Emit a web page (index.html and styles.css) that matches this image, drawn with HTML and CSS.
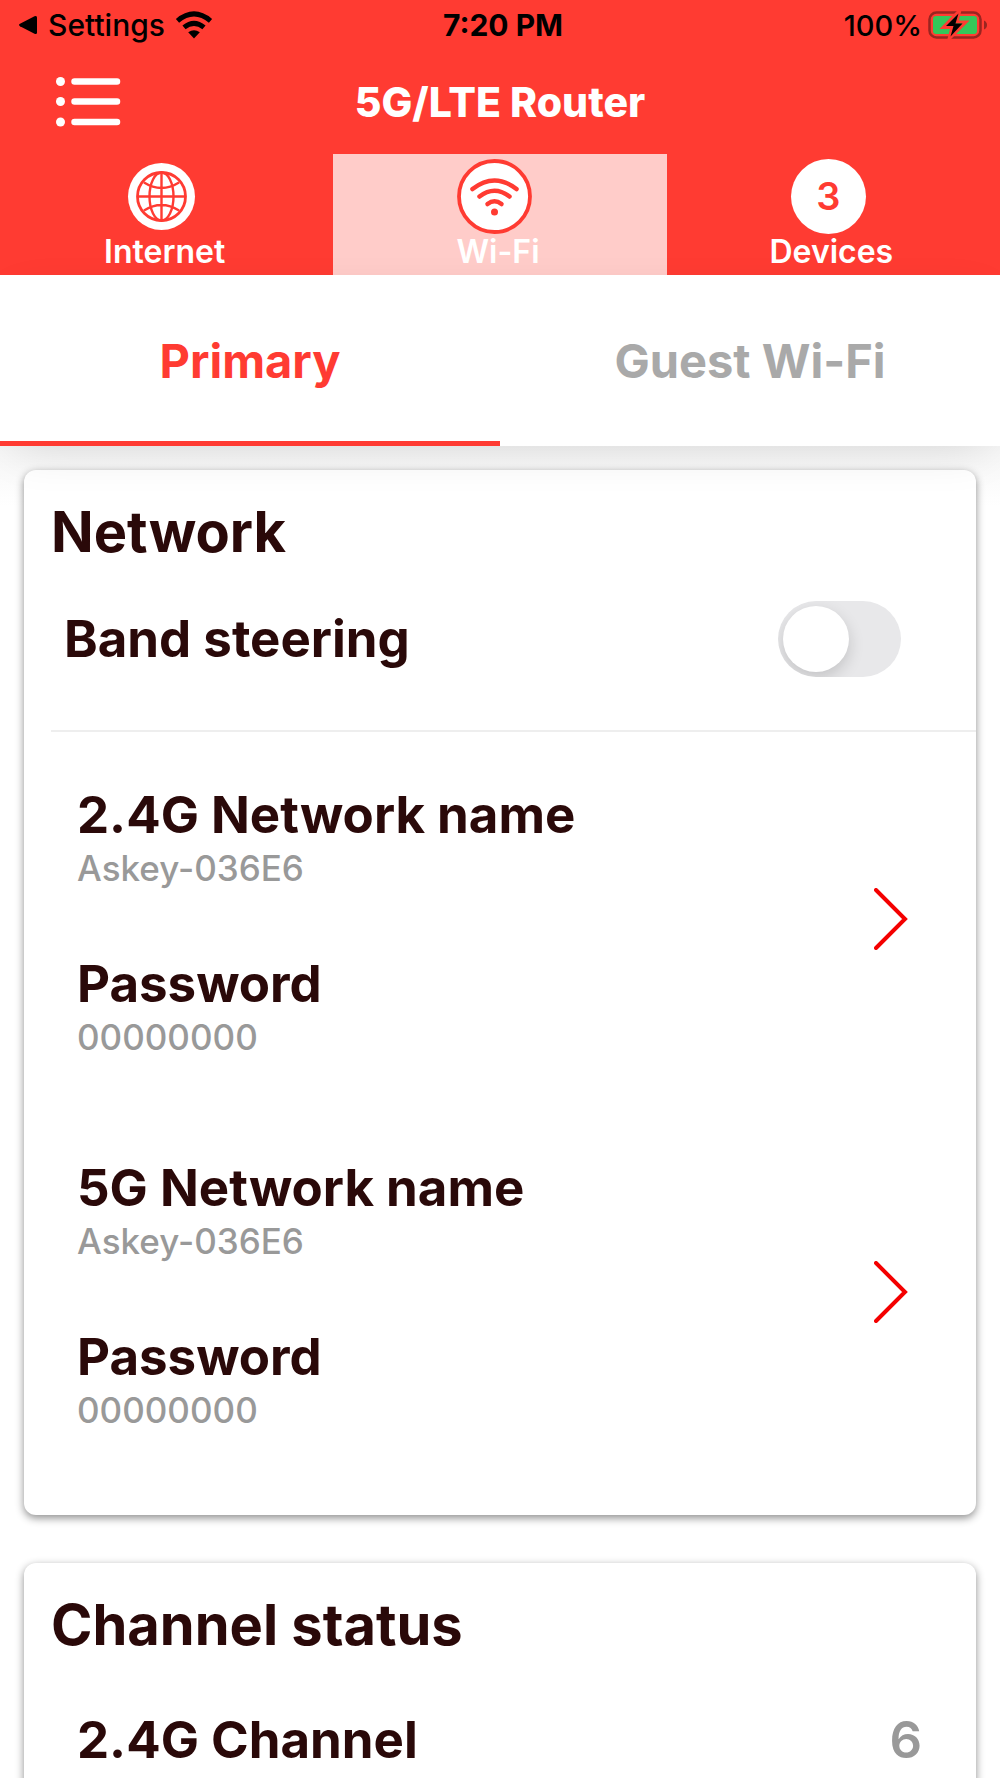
FILE: index.html
```html
<!DOCTYPE html>
<html lang="en">
<head>
<meta charset="utf-8">
<meta name="viewport" content="width=device-width, initial-scale=1">
<title>5G/LTE Router</title>
<link rel="stylesheet" href="styles.css">
</head>
<body>
<div class="app">
  <header class="header">
    <div class="status">
      <a class="status-back" href="#settings">
        <svg class="back-arrow" viewBox="0 0 20 20" aria-hidden="true"><path d="M2 8.800 16.500 1.300Q19 .3 19 2.500V17.500Q19 19.700 16.500 18.700L2 11.200Q0 10 2 8.800Z"/></svg>
        <span>Settings</span>
        <svg class="status-wifi" viewBox="0 0 38 28" aria-hidden="true">
          <path d="M19 27.500 24.800 21.300Q19 17 13.200 21.300Z"/>
          <path d="M9 16.400Q19 8.300 29 16.400" fill="none" stroke="#000" stroke-width="5"/>
          <path d="M2.500 9.800Q19-4 35.500 9.800" fill="none" stroke="#000" stroke-width="5"/>
        </svg>
      </a>
      <time class="status-time">7:20 PM</time>
      <div class="status-power">
        <span>100%</span>
        <svg class="battery" viewBox="0 0 60 30" aria-hidden="true">
          <rect x="1.500" y="2.500" width="51" height="25" rx="7" fill="none" stroke="#9a2520" stroke-width="2.500"/>
          <path d="M56 10.500Q59 12 59 15T56 19.500Z" fill="#9a2520"/>
          <rect x="5" y="6" width="44" height="18" rx="3" fill="#34c759"/>
          <path d="M30 2 15 17.500H24L21 29 38 12H29L31.500 2Z" fill="#34c759" stroke="#ff3b32" stroke-width="3"/>
          <path d="M30.500 3.500 18 16H25.500L22.500 26.500 34.500 13.500H27.500Z"/>
        </svg>
      </div>
    </div>
    <div class="titlebar">
      <button class="menu" type="button" aria-label="Menu">
        <svg viewBox="0 0 66 50" aria-hidden="true">
          <g fill="#fff"><circle cx="4.500" cy="4.500" r="4.500"/><circle cx="4.500" cy="24.500" r="4.500"/><circle cx="4.500" cy="45" r="4.500"/></g>
          <path d="M18.500 4.500H61M18.500 24.500H61M18.500 45H61" stroke="#fff" stroke-width="6.500" stroke-linecap="round"/>
        </svg>
      </button>
      <h1 class="title">5G/LTE Router</h1>
    </div>
    <nav class="tabs">
      <a class="tab" href="#internet">
        <svg class="tab-icon" viewBox="0 0 75 75" aria-hidden="true">
          <circle cx="37.500" cy="37.500" r="33.500" fill="#fff"/>
          <g fill="none" stroke="#ff3b32" stroke-width="2.400">
            <circle cx="37.500" cy="37.500" r="24" stroke-width="2.800"/>
            <ellipse cx="37.500" cy="37.500" rx="12" ry="24"/>
            <path d="M37.500 13.500V61.500M13.500 37.500H61.500M20 23.500Q37.500 34.500 55 23.500M20 51.500Q37.500 40.500 55 51.500"/>
          </g>
        </svg>
        <span class="tab-label">Internet</span>
      </a>
      <a class="tab tab-active" href="#wifi" aria-current="page">
        <svg class="tab-icon" viewBox="0 0 75 75" aria-hidden="true">
          <circle cx="37.500" cy="37.500" r="35.500" fill="#fff" stroke="#ff3b32" stroke-width="3.800"/>
          <g fill="none" stroke="#ff3b32" stroke-width="4.500" stroke-linecap="round">
            <path d="M15.500 30Q37.500 13 59.500 30"/>
            <path d="M22.500 37.500Q37.500 26 52.500 37.500"/>
            <path d="M30.500 45Q37.500 39.500 44.500 45"/>
          </g>
          <circle cx="37.500" cy="53" r="3.500" fill="#ff3b32"/>
        </svg>
        <span class="tab-label">Wi-Fi</span>
      </a>
      <a class="tab" href="#devices">
        <span class="tab-icon tab-count">3</span>
        <span class="tab-label">Devices</span>
      </a>
    </nav>
  </header>

  <nav class="subtabs">
    <a class="subtab subtab-active" href="#primary" aria-current="true">Primary</a>
    <a class="subtab" href="#guest">Guest Wi-Fi</a>
  </nav>

  <main class="content">
    <section class="card">
      <h2 class="card-title">Network</h2>
      <div class="steering">
        <label class="label" for="steering">Band steering</label>
        <input class="switch" type="checkbox" role="switch" id="steering">
      </div>
      <a class="network" href="#network-24g">
        <dl class="details">
          <div><dt class="label">2.4G Network name</dt><dd class="value">Askey-036E6</dd></div>
          <div><dt class="label">Password</dt><dd class="value">00000000</dd></div>
        </dl>
        <svg class="chevron" viewBox="0 0 34 62" aria-hidden="true"><path d="M2 2 31 31 2 60"/></svg>
      </a>
      <a class="network" href="#network-5g">
        <dl class="details">
          <div><dt class="label">5G Network name</dt><dd class="value">Askey-036E6</dd></div>
          <div><dt class="label">Password</dt><dd class="value">00000000</dd></div>
        </dl>
        <svg class="chevron" viewBox="0 0 34 62" aria-hidden="true"><path d="M2 2 31 31 2 60"/></svg>
      </a>
    </section>

    <section class="card">
      <h2 class="card-title">Channel status</h2>
      <dl class="channel">
        <dt class="label">2.4G Channel</dt>
        <dd class="channel-value">6</dd>
      </dl>
    </section>
  </main>
</div>
</body>
</html>
```
FILE: styles.css
```css
:root {
  --red: #ff3b32;
  --ink: #2a0909;
  --grey: #999;
}

* {
  box-sizing: border-box;
}

body {
  margin: 0;
  background: #fff;
  color: var(--ink);
  font-family: Inter, "Liberation Sans", sans-serif;
}

a {
  color: inherit;
  text-decoration: none;
}

h1,
h2,
dl,
dd {
  margin: 0;
}

.app {
  display: flex;
  flex-direction: column;
  height: 100vh;
  overflow: hidden;
}

.header {
  flex: none;
  background: var(--red);
  color: #fff;
}

.status {
  display: grid;
  grid-template-columns: 1fr auto 1fr;
  align-items: center;
  height: 50px;
  padding: 0 12px 0 18px;
  color: #000;
  font-size: 30px;
  font-weight: 500;
}

.status-back,
.status-power {
  display: flex;
  align-items: center;
}

.status-back {
  gap: 10px;
}

.back-arrow {
  width: 20px;
  height: 20px;
}

.status-wifi {
  width: 38px;
  height: 28px;
}

.status-time {
  font-weight: 700;
}

.status-power {
  justify-content: flex-end;
  gap: 6px;
  font-size: 29px;
}

.battery {
  width: 60px;
  height: 30px;
}

.titlebar {
  display: grid;
  grid-template-columns: 1fr auto 1fr;
  align-items: center;
  height: 104px;
  padding: 0 56px;
}

.menu {
  width: 66px;
  height: 50px;
  padding: 0;
  border: 0;
  background: none;
}

.menu svg {
  display: block;
}

.title {
  font-size: 41px;
  font-weight: 800;
}

.tabs {
  display: grid;
  grid-template-columns: repeat(3, 1fr);
}

.tab {
  display: flex;
  flex-direction: column;
  align-items: center;
  padding: 5px 4px 5px 0;
}

.tab-active {
  background: #ffccc9;
}

.tab-icon {
  width: 75px;
  height: 75px;
  margin-right: 6px;
}

.tab-count {
  border-radius: 50%;
  background: #fff;
  color: var(--red);
  font-size: 38px;
  font-weight: 600;
  line-height: 75px;
  text-align: center;
}

.tab-label {
  font-size: 32px;
  font-weight: 600;
  line-height: 36px;
}

.subtabs {
  position: relative;
  z-index: 1;
  flex: none;
  display: grid;
  grid-template-columns: 1fr 1fr;
  background: #fff;
  box-shadow: 0 14px 50px -14px rgba(0, 0, 0, 0.14);
}

.subtab {
  padding: 58px 0 52px;
  border-bottom: 5px solid transparent;
  color: #a9a9a9;
  font-size: 47px;
  font-weight: 700;
  line-height: 56px;
  text-align: center;
}

.subtab-active {
  border-color: var(--red);
  color: var(--red);
}

.content {
  flex: 1;
  display: flex;
  flex-direction: column;
  gap: 48px;
  min-height: 0;
  padding: 24px 24px 0;
  background: linear-gradient(#f6f6f6, #fff 60px);
}

.card {
  flex: none;
  padding: 26px 0 37px 27px;
  border-radius: 12px;
  background: #fff;
  box-shadow: 0 3px 8px rgba(0, 0, 0, 0.45);
}

.card-title {
  font-size: 56px;
  font-weight: 700;
  line-height: 72px;
}

.label {
  font-size: 51px;
  font-weight: 700;
  line-height: 60px;
}

.steering {
  display: flex;
  align-items: center;
  justify-content: space-between;
  padding: 33px 75px 53px 13px;
  border-bottom: 2px solid #eee;
}

.switch {
  appearance: none;
  width: 123px;
  height: 76px;
  margin: 0;
  padding: 5px;
  overflow: hidden;
  border-radius: 38px;
  background: #e8e8ea;
}

.switch::before {
  content: "";
  display: block;
  width: 66px;
  height: 66px;
  border-radius: 50%;
  background: #fff;
  box-shadow: 0 6px 16px rgba(0, 0, 0, 0.16);
}

.switch:checked {
  background: #34c759;
}

.switch:checked::before {
  margin-left: auto;
}

.network {
  display: flex;
  align-items: center;
  justify-content: space-between;
  padding: 0 68px 0 26px;
}

.details {
  display: grid;
  gap: 63px;
  padding: 53px 0 45px;
}

.value {
  color: var(--grey);
  font-size: 35px;
  font-weight: 500;
  line-height: 46px;
}

.chevron {
  width: 34px;
  height: 62px;
  fill: none;
  stroke: #f40000;
  stroke-width: 4;
  stroke-linecap: round;
}

.channel {
  display: flex;
  justify-content: space-between;
  padding: 49px 54px 0 26px;
}

.channel-value {
  color: var(--grey);
  font-size: 51px;
  font-weight: 600;
  line-height: 60px;
}
```
